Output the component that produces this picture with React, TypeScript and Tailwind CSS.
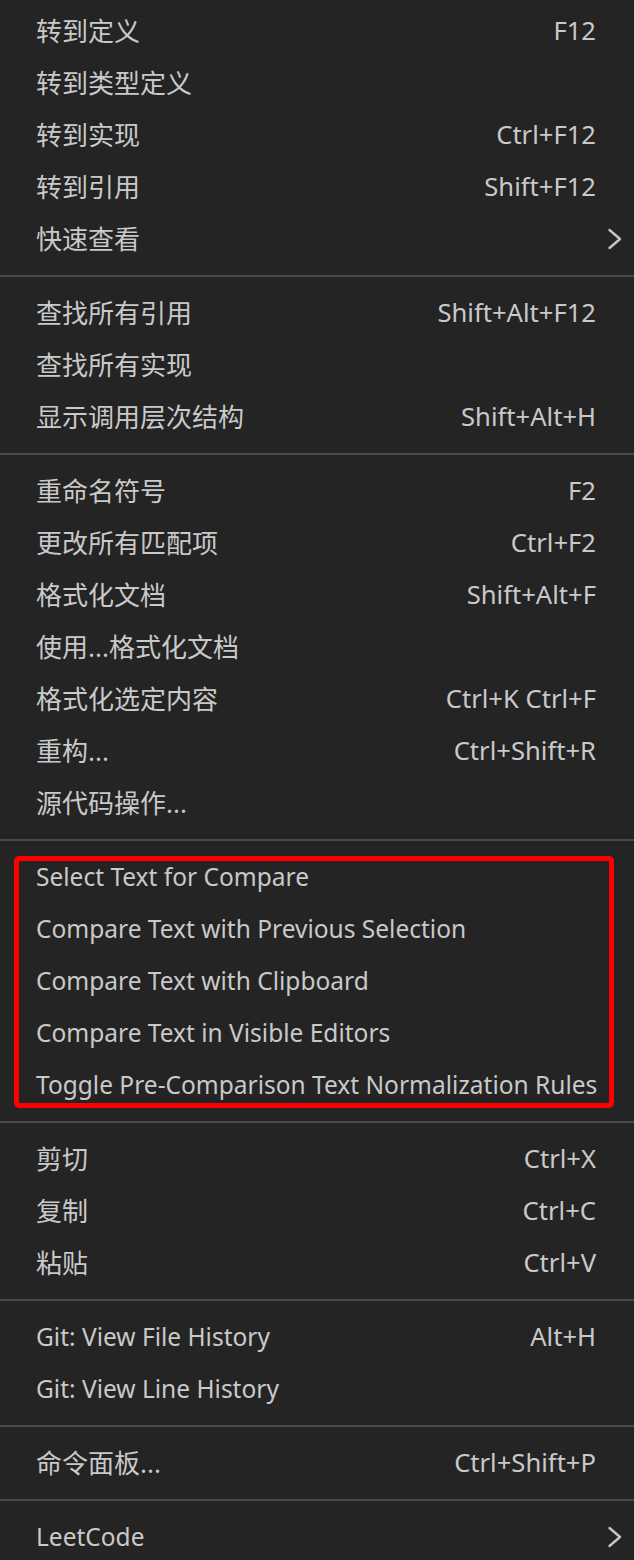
import React from 'react';

type Item = { label: string; shortcut?: string; submenu?: boolean; latin?: boolean };

const groups: Item[][] = [
  [
    { label: '转到定义', shortcut: 'F12' },
    { label: '转到类型定义' },
    { label: '转到实现', shortcut: 'Ctrl+F12' },
    { label: '转到引用', shortcut: 'Shift+F12' },
    { label: '快速查看', submenu: true },
  ],
  [
    { label: '查找所有引用', shortcut: 'Shift+Alt+F12' },
    { label: '查找所有实现' },
    { label: '显示调用层次结构', shortcut: 'Shift+Alt+H' },
  ],
  [
    { label: '重命名符号', shortcut: 'F2' },
    { label: '更改所有匹配项', shortcut: 'Ctrl+F2' },
    { label: '格式化文档', shortcut: 'Shift+Alt+F' },
    { label: '使用...格式化文档' },
    { label: '格式化选定内容', shortcut: 'Ctrl+K Ctrl+F' },
    { label: '重构...', shortcut: 'Ctrl+Shift+R' },
    { label: '源代码操作...' },
  ],
  [
    { label: 'Select Text for Compare', latin: true },
    { label: 'Compare Text with Previous Selection', latin: true },
    { label: 'Compare Text with Clipboard', latin: true },
    { label: 'Compare Text in Visible Editors', latin: true },
    { label: 'Toggle Pre-Comparison Text Normalization Rules', latin: true },
  ],
  [
    { label: '剪切', shortcut: 'Ctrl+X' },
    { label: '复制', shortcut: 'Ctrl+C' },
    { label: '粘贴', shortcut: 'Ctrl+V' },
  ],
  [
    { label: 'Git: View File History', shortcut: 'Alt+H', latin: true },
    { label: 'Git: View Line History', latin: true },
  ],
  [{ label: '命令面板...', shortcut: 'Ctrl+Shift+P' }],
  [{ label: 'LeetCode', submenu: true, latin: true }],
];

const Chevron = () => (
  <svg width="15" height="22" viewBox="0 0 15 22" fill="none">
    <path d="M2.5 2 L13 11 L2.5 20" stroke="#c6c6c6" strokeWidth="2.4" strokeLinecap="round" strokeLinejoin="round" />
  </svg>
);

const MenuRow = ({ item }: { item: Item }) => (
  <div className="flex h-[52px] items-center justify-between pl-[36px] pr-[12px]">
    <span className={item.latin ? 'whitespace-nowrap text-[24.5px]' : 'whitespace-nowrap text-[26px]'}>{item.label}</span>
    {item.shortcut && <span className="mr-[26px] whitespace-nowrap text-[25.6px]">{item.shortcut}</span>}
    {item.submenu && <Chevron />}
  </div>
);

export default function App() {
  return (
    <div
      className="min-h-screen w-full bg-[#242424] pt-[5px] text-[#c9c9c9]"
      style={{ fontFamily: '"Noto Sans", "Noto Sans CJK SC", sans-serif' }}
    >
      {groups.map((group, gi) => (
        <React.Fragment key={gi}>
          {gi > 0 && <div className="my-[10px] h-[2px] bg-[#4a4a4a]" />}
          <div className="relative">
            {group.map((item) => (
              <MenuRow key={item.label} item={item} />
            ))}
            {/* red highlight around the compare commands */}
            {gi === 3 && (
              <div className="pointer-events-none absolute top-[5px] right-[20px] bottom-[3px] left-[14px] rounded-[5px] border-[5px] border-[#ff0000]" />
            )}
          </div>
        </React.Fragment>
      ))}
    </div>
  );
}
